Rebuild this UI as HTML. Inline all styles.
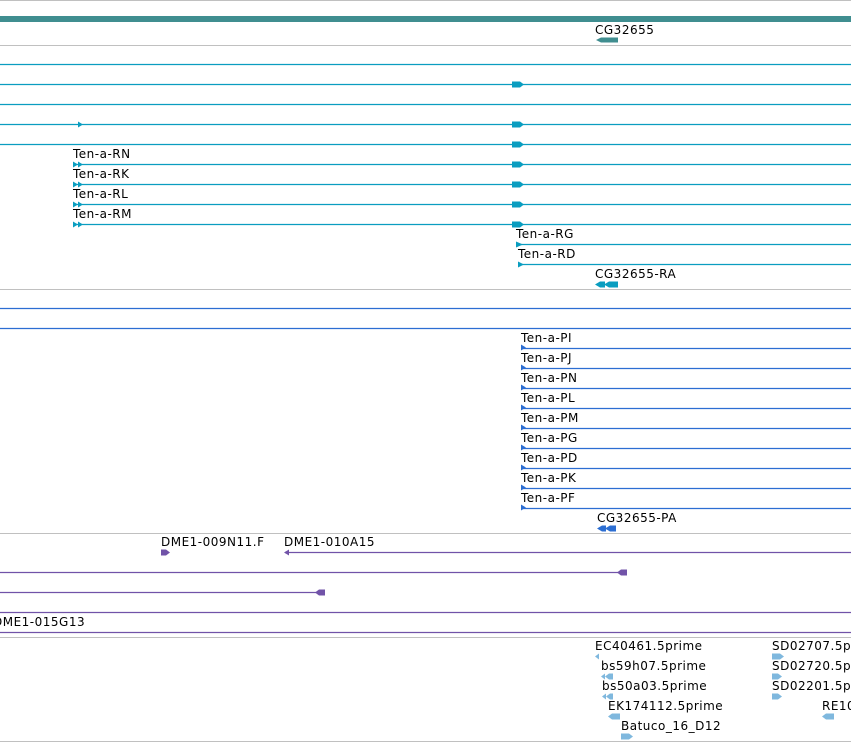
<!DOCTYPE html>
<html><head><meta charset="utf-8"><style>
html,body{margin:0;padding:0;background:#fff;width:851px;height:742px;overflow:hidden}
svg{display:block}
text{font-family:"DejaVu Sans","Liberation Sans",sans-serif;font-size:12px;letter-spacing:0.5px;fill:#000}
</style></head><body>
<svg width="851" height="742" viewBox="0 0 851 742" xmlns="http://www.w3.org/2000/svg">
<g stroke="#c0c0c0" stroke-width="1">
<line x1="0" y1="0.5" x2="851" y2="0.5"/>
<line x1="0" y1="45.5" x2="851" y2="45.5"/>
<line x1="0" y1="289.5" x2="851" y2="289.5"/>
<line x1="0" y1="533.5" x2="851" y2="533.5"/>
<line x1="0" y1="637.5" x2="851" y2="637.5"/>
<line x1="0" y1="741.5" x2="851" y2="741.5"/>
</g>
<rect x="0" y="16" width="851" height="6" fill="#408e90"/>
<text x="595" y="34">CG32655</text>
<path d="M596 40 L601 37.5 L618 37.5 L618 42.5 L601 42.5 Z" fill="#408e90"/>

<g stroke="#0a9dc0" stroke-width="1.3">
<line x1="0" y1="64.5" x2="851" y2="64.5"/>
<line x1="0" y1="84.5" x2="851" y2="84.5"/>
<line x1="0" y1="104.5" x2="851" y2="104.5"/>
<line x1="0" y1="124.5" x2="851" y2="124.5"/>
<line x1="0" y1="144.5" x2="851" y2="144.5"/>
<line x1="73" y1="164.5" x2="851" y2="164.5"/>
<line x1="73" y1="184.5" x2="851" y2="184.5"/>
<line x1="73" y1="204.5" x2="851" y2="204.5"/>
<line x1="73" y1="224.5" x2="851" y2="224.5"/>
<line x1="516" y1="244.5" x2="851" y2="244.5"/>
<line x1="518" y1="264.5" x2="851" y2="264.5"/>
</g>
<g fill="#0a9dc0">
<path d="M512 81.5h8l4 3-4 3h-8z"/>
<path d="M512 121.5h8l4 3-4 3h-8z"/>
<path d="M512 141.5h8l4 3-4 3h-8z"/>
<path d="M512 161.5h8l4 3-4 3h-8z"/>
<path d="M512 181.5h8l4 3-4 3h-8z"/>
<path d="M512 201.5h8l4 3-4 3h-8z"/>
<path d="M512 221.5h8l4 3-4 3h-8z"/>
<path d="M78 121.5l5 3-5 3z"/>
<path d="M73 161.5l5 3-5 3zM78 161.5l5 3-5 3z"/>
<path d="M73 181.5l5 3-5 3zM78 181.5l5 3-5 3z"/>
<path d="M73 201.5l5 3-5 3zM78 201.5l5 3-5 3z"/>
<path d="M73 221.5l5 3-5 3zM78 221.5l5 3-5 3z"/>
<path d="M516 241.5l7 3-7 3z"/>
<path d="M518 261.5l6 3-6 3z"/>
<path d="M595 284.5l5-3h5v6h-5z M604 284.5l5-3h9v6h-9z"/>
</g>
<text x="73" y="158">Ten-a-RN</text>
<text x="73" y="178">Ten-a-RK</text>
<text x="73" y="198">Ten-a-RL</text>
<text x="73" y="218">Ten-a-RM</text>
<text x="516" y="238">Ten-a-RG</text>
<text x="518" y="258">Ten-a-RD</text>
<text x="595" y="278">CG32655-RA</text>

<g stroke="#2c6ed2" stroke-width="1.3">
<line x1="0" y1="308.5" x2="851" y2="308.5"/>
<line x1="0" y1="328.5" x2="851" y2="328.5"/>
<line x1="521" y1="348.5" x2="851" y2="348.5"/>
<line x1="521" y1="368.5" x2="851" y2="368.5"/>
<line x1="521" y1="388.5" x2="851" y2="388.5"/>
<line x1="521" y1="408.5" x2="851" y2="408.5"/>
<line x1="521" y1="428.5" x2="851" y2="428.5"/>
<line x1="521" y1="448.5" x2="851" y2="448.5"/>
<line x1="521" y1="468.5" x2="851" y2="468.5"/>
<line x1="521" y1="488.5" x2="851" y2="488.5"/>
<line x1="521" y1="508.5" x2="851" y2="508.5"/>
</g>
<g fill="#2c6ed2">
<path d="M521 344.5l5 3-5 3z"/><path d="M521 364.5l5 3-5 3z"/><path d="M521 384.5l5 3-5 3z"/>
<path d="M521 404.5l5 3-5 3z"/><path d="M521 424.5l5 3-5 3z"/><path d="M521 444.5l5 3-5 3z"/>
<path d="M521 464.5l5 3-5 3z"/><path d="M521 484.5l5 3-5 3z"/><path d="M521 504.5l5 3-5 3z"/>
<path d="M597 528.5l5-3h4v6h-4z M605 528.5l5-3h6v6h-6z"/>
</g>
<text x="521" y="342">Ten-a-PI</text>
<text x="521" y="362">Ten-a-PJ</text>
<text x="521" y="382">Ten-a-PN</text>
<text x="521" y="402">Ten-a-PL</text>
<text x="521" y="422">Ten-a-PM</text>
<text x="521" y="442">Ten-a-PG</text>
<text x="521" y="462">Ten-a-PD</text>
<text x="521" y="482">Ten-a-PK</text>
<text x="521" y="502">Ten-a-PF</text>
<text x="597" y="522">CG32655-PA</text>

<g stroke="#7153a8" stroke-width="1.3">
<line x1="285" y1="552.5" x2="851" y2="552.5"/>
<line x1="0" y1="572.5" x2="627" y2="572.5"/>
<line x1="0" y1="592.5" x2="325" y2="592.5"/>
<line x1="0" y1="612.5" x2="851" y2="612.5"/>
<line x1="0" y1="632.5" x2="851" y2="632.5"/>
</g>
<g fill="#7153a8">
<path d="M161 549.5h5l4 3-4 3h-5z"/>
<path d="M284 552.5l5-3v6z"/>
<path d="M617 572.5l4-3h6v6h-6z"/>
<path d="M315 592.5l4-3h6v6h-6z"/>
</g>
<text x="161" y="546">DME1-009N11.F</text>
<text x="284" y="546">DME1-010A15</text>
<text x="-7" y="626">DME1-015G13</text>

<g fill="#7fb8de">
<path d="M595 656.5l4-3v6z"/>
<path d="M601 676.5l4-3v6z M605 676.5l4-3h4v6h-4z"/>
<path d="M602 696.5l4-3v6z M606 696.5l4-3h3v6h-3z"/>
<path d="M608 716.5l4-3h8v6h-8z"/>
<path d="M621 733.5h8l4 3-4 3h-8z"/>
<path d="M772 653.5h8l4 3-4 3h-8z"/>
<path d="M772 673.5h6l4 3-4 3h-6z"/>
<path d="M772 693.5h6l4 3-4 3h-6z"/>
<path d="M822 716.5l4-3h8v6h-8z"/>
</g>
<text x="595" y="650">EC40461.5prime</text>
<text x="601" y="670">bs59h07.5prime</text>
<text x="602" y="690">bs50a03.5prime</text>
<text x="608" y="710">EK174112.5prime</text>
<text x="621" y="730">Batuco_16_D12</text>
<text x="772" y="650">SD02707.5prime</text>
<text x="772" y="670">SD02720.5prime</text>
<text x="772" y="690">SD02201.5prime</text>
<text x="822" y="710">RE10</text>
</svg>
</body></html>
